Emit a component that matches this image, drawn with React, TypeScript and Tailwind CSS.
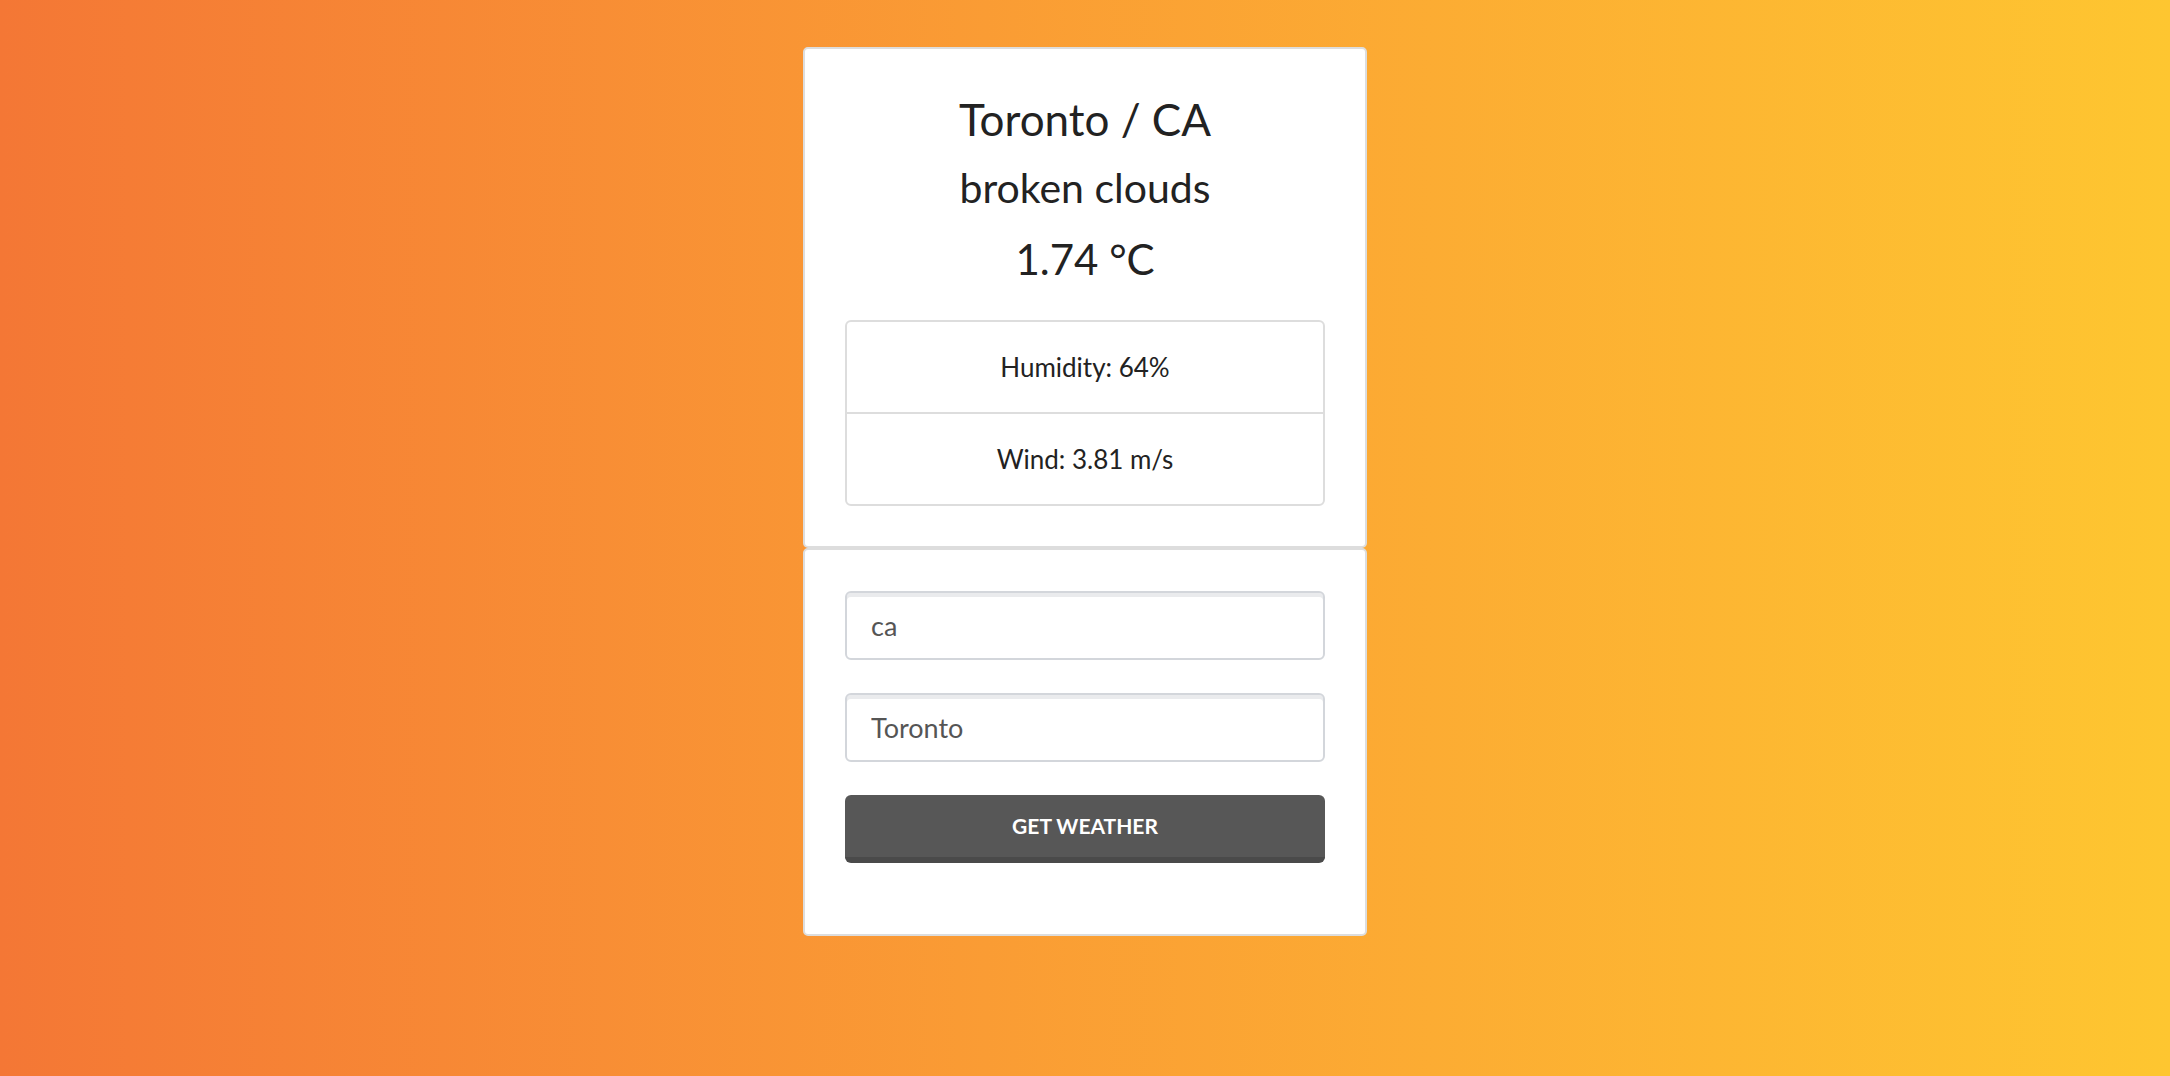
import { useState } from "react";

const font = { fontFamily: "Lato, 'Open Sans', sans-serif" };

function Reading({ label, value }: { label: string; value: string }) {
  return (
    <li className="py-[29px] text-[26px] leading-[32px] text-[#222] text-center border-b-2 border-[#ddd] last:border-b-0">
      {label}: {value}
    </li>
  );
}

export default function App() {
  const [country, setCountry] = useState("ca");
  const [city, setCity] = useState("Toronto");

  return (
    <div
      className="min-h-screen w-full bg-linear-to-r from-[#f47735] to-[#fec630] flex justify-center pt-[47px]"
      style={font}
    >
      <div className="w-[564px] flex flex-col">
        {/* current conditions */}
        <div className="bg-white border-2 border-[#ddd] rounded-[5px] px-[40px] pt-[41px] pb-[40px] text-center text-[#222]">
          <h1 className="text-[44px] leading-[58px]">Toronto / CA</h1>
          <h2 className="mt-[16px] text-[41px] leading-[48px]">broken clouds</h2>
          <p className="mt-[18px] text-[42px] leading-[58px]">1.74 °C</p>
          <ul className="mt-[32px] border-2 border-[#ddd] rounded-[6px]">
            <Reading label="Humidity" value="64%" />
            <Reading label="Wind" value="3.81 m/s" />
          </ul>
        </div>

        {/* search form */}
        <form
          className="bg-white border-2 border-[#ddd] rounded-[5px] px-[40px] pt-[41px] pb-[71px] flex flex-col gap-[33px]"
          onSubmit={(e) => e.preventDefault()}
        >
          <input
            value={country}
            onChange={(e) => setCountry(e.target.value)}
            className="h-[69px] w-full rounded-[6px] border-2 border-[#d3d6db] px-[24px] text-[27px] text-[#555] shadow-[inset_0_4px_0_#eaebed] outline-none"
            style={font}
          />
          <input
            value={city}
            onChange={(e) => setCity(e.target.value)}
            className="h-[69px] w-full rounded-[6px] border-2 border-[#d3d6db] px-[24px] text-[27px] text-[#555] shadow-[inset_0_4px_0_#eaebed] outline-none"
            style={font}
          />
          <button
            type="submit"
            className="h-[68px] w-full rounded-[6px] bg-[#575757] border-b-[6px] border-[#4a4a4a] text-white font-bold text-[21px] uppercase"
            style={font}
          >
            Get Weather
          </button>
        </form>
      </div>
    </div>
  );
}
